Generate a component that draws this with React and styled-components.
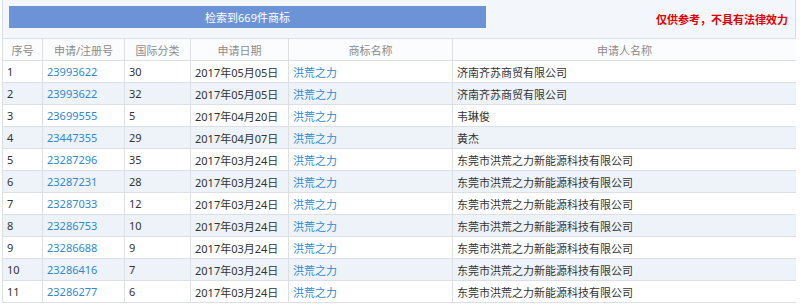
import styled, { createGlobalStyle } from "styled-components";

const GlobalStyle = createGlobalStyle`
	body {
		margin: 0;
		background: #ffffff;
		font-family: "Noto Sans", "Noto Sans CJK SC", sans-serif;
	}
`;

const Panel = styled.div`
	width: 794px;
	height: 304px;
	margin-left: 2px;
	overflow: hidden;
`;

const TopBar = styled.div`
	height: 38px;
	box-sizing: border-box;
	display: flex;
	align-items: flex-start;
	justify-content: space-between;

	padding: 6px 7px 0 6px;
	border-left: 1px solid #d9dee5;
	border-right: 1px solid #d9dee5;
	background: #f3f6fa;
`;

const ResultBanner = styled.div`
	width: 477px;
	height: 22px;

	display: flex;
	align-items: center;
	justify-content: center;

	background: #6c93d5;
	color: #ffffff;
	font-size: 11px;
`;

const Notice = styled.span`
	margin-top: 5px;

	color: #e50000;
	font-size: 11px;
	font-weight: bold;
`;

const Table = styled.table`
	width: 794px;
	table-layout: fixed;
	border-collapse: collapse;

	font-size: 11px;
	color: #333333;
`;

const HeadCell = styled.th`
	height: 21px;
	padding: 0;

	border: 1px solid #dcdfe3;
	background: #fbfcfd;
	color: #8c8c8c;
	font-weight: normal;
	text-align: center;
`;

const Row = styled.tr`
	background: ${(p) => (p.$striped ? "#eef3f9" : "#ffffff")};
`;

const Cell = styled.td`
	height: 21px;
	padding: 0 0 0 4px;

	border: 1px solid #dcdfe3;
	white-space: nowrap;
	color: ${(p) => (p.$link ? "#3089d0" : "#333333")};
`;

const columns = [
	{ title: "序号", width: 40 },
	{ title: "申请/注册号", width: 82 },
	{ title: "国际分类", width: 66 },
	{ title: "申请日期", width: 98 },
	{ title: "商标名称", width: 164 },
	{ title: "申请人名称", width: 344 },
];

const company = "东莞市洪荒之力新能源科技有限公司";

const rows = [
	["23993622", "30", "2017年05月05日", "济南齐苏商贸有限公司"],
	["23993622", "32", "2017年05月05日", "济南齐苏商贸有限公司"],
	["23699555", "5", "2017年04月20日", "韦琳俊"],
	["23447355", "29", "2017年04月07日", "黄杰"],
	["23287296", "35", "2017年03月24日", company],
	["23287231", "28", "2017年03月24日", company],
	["23287033", "12", "2017年03月24日", company],
	["23286753", "10", "2017年03月24日", company],
	["23286688", "9", "2017年03月24日", company],
	["23286416", "7", "2017年03月24日", company],
	["23286277", "6", "2017年03月24日", company],
];

const App = () => {
	return (
		<>
			<GlobalStyle />
			<Panel>
				<TopBar>
					<ResultBanner>检索到669件商标</ResultBanner>
					<Notice>仅供参考，不具有法律效力</Notice>
				</TopBar>
				<Table>
					<colgroup>
						{columns.map((col) => (
							<col key={col.title} style={{ width: col.width }} />
						))}
					</colgroup>
					<thead>
						<tr>
							{columns.map((col) => (
								<HeadCell key={col.title}>{col.title}</HeadCell>
							))}
						</tr>
					</thead>
					<tbody>
						{rows.map(([regNo, cls, date, applicant], i) => (
							<Row key={i} $striped={i % 2 === 1}>
								<Cell>{i + 1}</Cell>
								<Cell $link>{regNo}</Cell>
								<Cell>{cls}</Cell>
								<Cell>{date}</Cell>
								<Cell $link>洪荒之力</Cell>
								<Cell>{applicant}</Cell>
							</Row>
						))}
					</tbody>
				</Table>
			</Panel>
		</>
	);
};

export default App;
